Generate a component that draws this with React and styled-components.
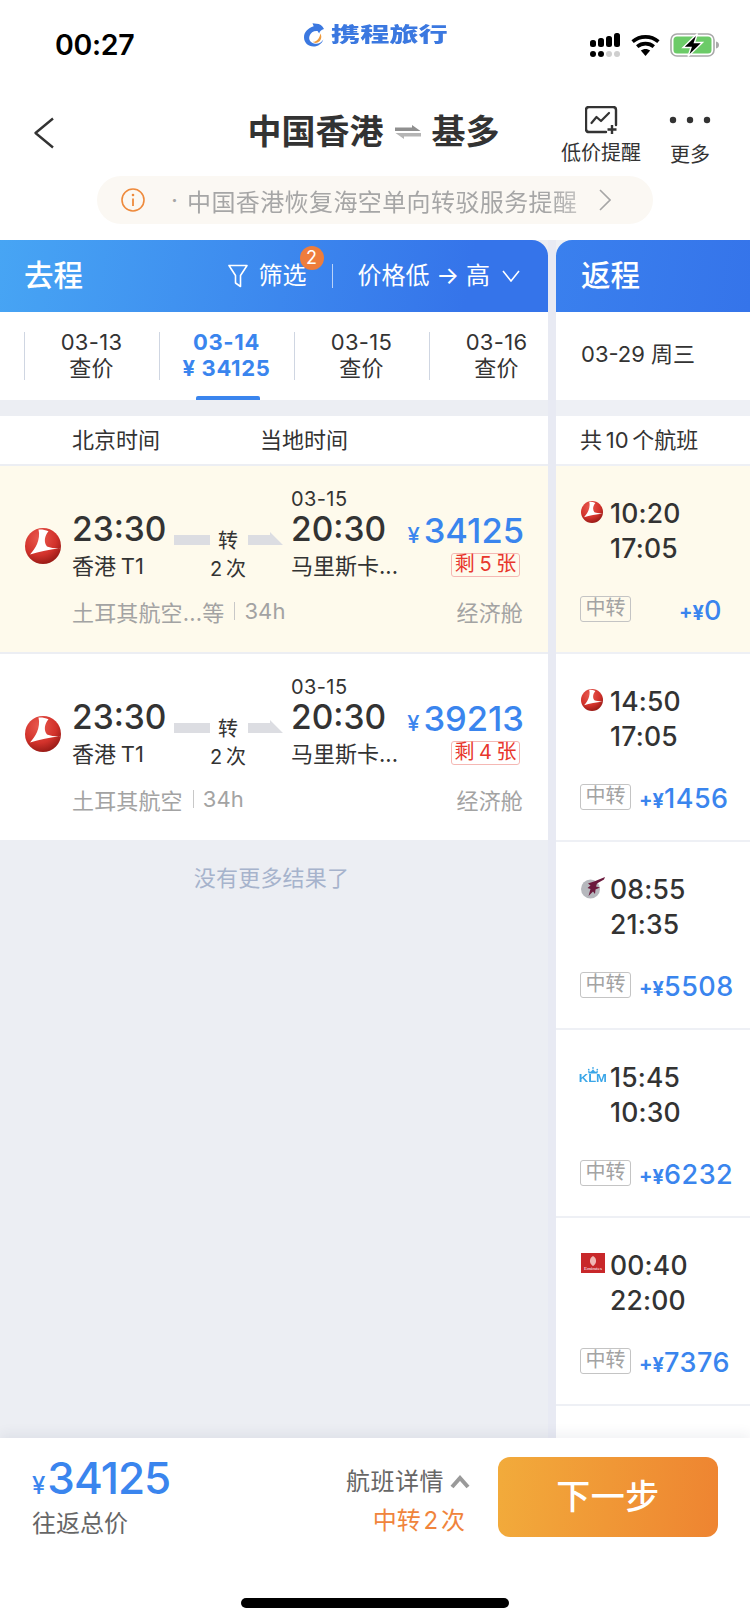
import React from "react";
import styled, { createGlobalStyle } from "styled-components";

const SANS = `Inter, "Noto Sans CJK SC", "Noto Sans", sans-serif`;
const BLUE = "#3a85ee";

const Global = createGlobalStyle`
  html, body { margin: 0; padding: 0; background: #fff; }
  * { box-sizing: border-box; }
  body { font-family: ${SANS}; color: #333; }
`;

const Page = styled.div`
  width: 750px; height: 1624px; display: flex; flex-direction: column;
  background: #fff; overflow: hidden; position: relative;
`;

/* status bar */
const StatusBar = styled.div`
  height: 88px; flex: none; display: flex; align-items: flex-start;
  justify-content: space-between; padding: 23px 30px 0 55px; position: relative;
`;
const Clock = styled.div`
  font-size: 28.5px; font-weight: 600; color: #000; line-height: 44px; width: 80px; letter-spacing: -.3px;
`;
const Brand = styled.div`
  display: flex; align-items: center; gap: 6px; margin-left: 27px;
`;
const BrandName = styled.div`
  width: 118px; height: 24px; color: #3b78e0; font-size: 20px; line-height: 24px; font-weight: 800;
  white-space: nowrap;
  span { display: inline-block; transform: scaleX(1.46); transform-origin: left center; }
`;
const StatusIcons = styled.div`
  display: flex; align-items: center; gap: 10px; margin-top: 10px;
`;

/* nav */
const Nav = styled.div`
  flex: none; height: 88px; display: grid; grid-template-columns: 1fr auto 1fr; align-items: start;
`;
const Back = styled.div`
  padding: 29px 0 0 33px; line-height: 0;
`;
const Title = styled.div`
  display: flex; align-items: center; gap: 11px; font-size: 34px; font-weight: 600; color: #333;
  line-height: 48px; padding: 20px 3px 0 0;
`;
const NavActions = styled.div`
  display: flex; justify-content: flex-end; gap: 28px; padding-right: 39px;
`;
const NavAction = styled.div`
  display: flex; flex-direction: column; align-items: center; font-size: 20px; line-height: 26px; color: #333;
  svg { display: block; }
`;
const IconSlot = styled.div`
  height: ${p => p.$h}px; padding-top: ${p => p.$top}px;
`;

/* notice */
const NoticeWrap = styled.div`
  flex: none; height: 64px; padding: 0 97px;
`;
const Notice = styled.div`
  height: 48px; border-radius: 24px; background: #fbf8f3; display: flex; align-items: center;
  padding: 0 42px 0 24px; font-size: 24px; color: #a6a6a6;
`;
const NoticeDot = styled.span`
  margin: 0 11px 0 26px; width: 5px; text-align: center;
`;
const NoticeText = styled.span`
  white-space: nowrap; flex: 1; overflow: hidden; letter-spacing: .4px;
  -webkit-mask-image: linear-gradient(90deg, #000 88%, rgba(0,0,0,.35) 100%);
  mask-image: linear-gradient(90deg, #000 88%, rgba(0,0,0,.35) 100%);
`;

/* columns */
const Columns = styled.div`
  flex: 1; min-height: 0; display: flex; gap: 8px; background: #e8eaf3; overflow: hidden; position: relative;
`;
const LeftPanel = styled.div`
  width: 548px; flex: none; background: #eceef3; display: flex; flex-direction: column;
`;
const RightPanel = styled.div`
  flex: 1; background: #eef0f5; display: flex; flex-direction: column;
`;
const PanelHead = styled.div`
  height: 72px; flex: none; display: flex; align-items: center; color: #fff;
  background: ${p => p.$right
    ? "linear-gradient(100deg, #3a80ee 0%, #3574ea 100%)"
    : "linear-gradient(100deg, #47a5f4 0%, #3574ea 85%)"};
  border-radius: ${p => p.$right ? "16px 0 0 0" : "0 16px 0 0"};
  padding: ${p => p.$right ? "0 0 0 25px" : "0 28px 0 24px"};
`;
const HeadTitle = styled.div`
  font-size: 29.5px; font-weight: 500; line-height: 40px; margin-top: -2px;
`;
const HeadTools = styled.div`
  margin-left: auto; display: flex; align-items: center; font-size: 24px; line-height: 32px;
`;
const FilterBtn = styled.div`
  display: flex; align-items: center; gap: 11px; position: relative;
`;
const Badge = styled.span`
  position: absolute; right: -17px; top: -14px; width: 24px; height: 24px; border-radius: 50%;
  background: #ee7d3c; color: #fff; font-size: 18px; line-height: 24px; text-align: center;
`;
const HeadDivider = styled.span`
  width: 1px; height: 24px; background: rgba(255,255,255,.65); margin: 0 25px 0 25px;
`;
const SortBtn = styled.div`
  display: flex; align-items: center; gap: 12px;
`;

const DateRow = styled.div`
  height: 88px; flex: none; background: #fff; display: flex; padding: 20px 0 0 24px; position: relative;
`;
const DateCell = styled.div`
  width: 135px; height: 48px; flex: none; border-left: 1px solid #cfd6e2; text-align: center;
  font-size: 22px; line-height: 26px; letter-spacing: ${p => p.$active ? ".65px" : ".3px"};
  color: ${p => p.$active ? BLUE : "#333"};
  font-weight: ${p => p.$active ? 700 : 400};
  white-space: nowrap; padding-right: 1px;
  position: relative;
`;
const DateText = styled.div`
  margin-top: -3px;
`;
const DateMark = styled.span`
  position: absolute; left: 36px; bottom: -20px; width: 64px; height: 4px; border-radius: 2px 2px 0 0; background: ${BLUE};
`;
const RightDate = styled.div`
  height: 88px; flex: none; background: #fff; padding-left: 25px; font-size: 22px; line-height: 84px; color: #333;
`;
const Strip = styled.div`
  height: 16px; flex: none;
`;
const SubHead = styled.div`
  height: 48px; flex: none; background: #fff; font-size: 22px; line-height: 48px; color: #333;
  padding-left: ${p => p.$pad}px; margin-bottom: 2px; display: flex; gap: 13px; word-spacing: -2.5px;
  span { width: 87px; white-space: nowrap; }
  span + span { margin-left: 88px; }
`;

/* left flight card */
const Card = styled.div`
  height: 186px; flex: none; margin-bottom: 2px; padding: 20px 26px 0 25px;
  background: ${p => p.$hl ? "#fefaec" : "#fff"};
`;
const CardMain = styled.div`
  display: flex; height: 96px;
`;
const AirlineSlot = styled.div`
  width: 47px; flex: none; padding-top: 42px; line-height: 0;
`;
const DepCol = styled.div`
  width: 102px; flex: none; padding-top: 26px;
`;
const TimeBig = styled.div`
  font-size: 33.5px; font-weight: 500; line-height: 36px; color: #333; white-space: nowrap; margin-top: -1px; margin-bottom: 1px;
`;
const Station = styled.div`
  font-size: 22px; line-height: 30px; margin-top: 4px; color: #333; white-space: nowrap; word-spacing: -1.5px;
`;
const TransferCol = styled.div`
  width: 117px; flex: none; display: flex; align-items: flex-start; padding-top: 49px;
  svg { display: block; flex: none; }
`;
const TransferText = styled.div`
  width: 38px; flex: none; text-align: center; font-size: 20px; line-height: 28px; color: #333;
  margin-top: -8px; white-space: nowrap; word-spacing: -2px; padding-right: 2px;
`;
const ArrCol = styled.div`
  width: 112px; flex: none;
`;
const NextDay = styled.div`
  font-size: 20px; line-height: 26px; color: #333; letter-spacing: .4px;
`;
const PriceCol = styled.div`
  flex: 1; min-width: 0; padding-top: 26px; display: flex; flex-direction: column; align-items: flex-end;
`;
const Price = styled.div`
  color: ${BLUE}; font-size: 34.5px; height: 38px; line-height: 38px; font-weight: 500; white-space: nowrap; margin-right: -2px;
  span { font-size: 22px; margin-right: 4px; line-height: 1; }
`;
const Left = styled.div`
  margin-top: 3px; height: 24px; width: 69px; margin-right: 2px; border: 1px solid #f5b8b4; border-radius: 3px;
  color: #e8372c; font-size: 20px; line-height: 21px; text-align: center; white-space: nowrap; word-spacing: -1px;
`;
const CardFoot = styled.div`
  margin-top: 14px; padding-left: 47px; display: flex; align-items: center; height: 30px;
  font-size: 22px; color: #a3a3a3; white-space: nowrap; letter-spacing: .15px;
`;
const FootSep = styled.span`
  width: 1px; height: 18px; background: #c8c8c8; margin: 0 9px 0 10px;
`;
const FootCabin = styled.span`
  margin-left: auto; margin-right: -1px;
`;
const NoMore = styled.div`
  text-align: center; font-size: 22px; line-height: 30px; color: #a6b3cc; padding-top: 21px; padding-right: 5px; letter-spacing: .2px;
`;

/* right flight rows */
const Row = styled.div`
  height: 186px; flex: none; margin-bottom: 2px; padding: 30px 0 0 24px;
  background: ${p => p.$hl ? "#fefaec" : "#fff"};
`;
const RowTop = styled.div`
  display: flex; height: 70px;
`;
const RowLogo = styled.div`
  width: 30px; flex: none; padding: 5px 0 0 1px; line-height: 0;
`;
const RowTime = styled.div`
  font-size: 26.5px; font-weight: 500; line-height: 35px; color: #333; letter-spacing: .2px;
`;
const RowFoot = styled.div`
  margin-top: 30px; display: flex; align-items: center; height: 26px;
`;
const StopTag = styled.div`
  width: 51px; height: 26px; flex: none; border: 1px solid #c4c4c4; border-radius: 3px; font-size: 20px;
  line-height: 23px; text-align: center; color: #a3a3a3; white-space: nowrap;
`;
const Extra = styled.div`
  margin-left: ${p => p.$ml}px; margin-top: 5px; color: ${BLUE}; font-size: 27px; font-weight: 500; line-height: 30px;
  white-space: nowrap; letter-spacing: .5px;
  span { font-size: 20px; font-weight: 700; letter-spacing: 0; }
`;
const Filler = styled.div`
  height: 40px; flex: none; background: #fff;
`;

/* bottom */
const BottomBar = styled.div`
  flex: none; height: 186px; background: #fff; position: relative; display: flex; align-items: flex-start;
  padding: 19px 32px 0 32px; box-shadow: 0 -4px 12px rgba(40,50,90,.07);
`;
const Total = styled.div`
  flex: 1;
`;
const TotalPrice = styled.div`
  color: ${BLUE}; font-size: 44px; height: 50px; line-height: 50px; font-weight: 500; white-space: nowrap;
  letter-spacing: -1px; margin-top: -4px;
  span { font-size: 24px; margin-right: 2px; font-weight: 500; letter-spacing: 0; line-height: 1; }
`;
const TotalLabel = styled.div`
  font-size: 24px; line-height: 32px; color: #666; margin-top: 5px;
`;
const Detail = styled.div`
  display: flex; flex-direction: column; align-items: flex-end; margin-right: 28px; padding-top: 9px;
`;
const DetailLink = styled.div`
  display: flex; align-items: center; gap: 6px; font-size: 24px; line-height: 32px; color: #666; letter-spacing: .5px;
  svg { display: block; }
`;
const DetailStops = styled.div`
  margin-top: 7px; font-size: 24px; line-height: 32px; color: #f0843c; margin-right: 5px; white-space: nowrap; word-spacing: -4px;
`;
const NextBtn = styled.div`
  width: 220px; height: 80px; flex: none; border-radius: 12px; color: #fff; font-size: 34px;
  line-height: 80px; text-align: center; font-weight: 500; letter-spacing: .5px;
  background: linear-gradient(95deg, #f2ab3b 0%, #ee8431 100%);
`;
const HomeBar = styled.div`
  position: absolute; left: 241px; top: 160px; width: 268px; height: 10px; border-radius: 5px; background: #000;
`;

/* airline logos */
const TurkishLogo = ({ size }) => {
  const id = `tk${size}`;
  return (
    <svg width={size} height={size} viewBox="0 0 36 36">
      <defs>
        <radialGradient id={id} cx="40%" cy="28%" r="78%">
          <stop offset="0" stopColor="#ea5a50" />
          <stop offset="0.6" stopColor="#d2322b" />
          <stop offset="1" stopColor="#8f1713" />
        </radialGradient>
      </defs>
      <circle cx="18" cy="18" r="18" fill={`url(#${id})`} />
      <path d="M13.5 1.5C16.5 1.2 20 1.6 23.5 3.2C19.5 8 18.5 14 22 18.5C26 20 31 20.6 35.8 20.3C25 21.5 14 23.5 5 26.5C10 21 16 12 13.5 1.5Z" fill="#fff" />
    </svg>
  );
};
const QatarLogo = () => (
  <svg width="24" height="22" viewBox="0 0 24 22">
    <circle cx="9.5" cy="12" r="9.5" fill="#b6b8bd" />
    <path d="M24 0L13 4.5L7 6.5L9.5 8.5L6.5 11L9.5 12L7.5 19L12 14.5L14 17L14.5 12.5L19 10.5L15 9.5L16 6.5L23 2.5Z" fill="#6b1a3d" />
  </svg>
);
const KlmBox = styled.div`
  width: 24px; height: 20px; display: flex; flex-direction: column; align-items: center; color: #3aa6e8; margin-top: 2px;
  svg { display: block; }
`;
const KlmText = styled.span`
  font-size: 10px; line-height: 9px; font-weight: 700; font-family: "Liberation Sans", sans-serif;
  display: inline-block; transform: scaleX(1.3);
`;
const KlmLogo = () => (
  <KlmBox>
    <svg width="12" height="7" viewBox="0 0 14 8">
      <circle cx="7" cy="1" r="1" fill="#3aa6e8" />
      <circle cx="2" cy="3" r="1" fill="#3aa6e8" />
      <circle cx="12" cy="3" r="1" fill="#3aa6e8" />
      <path d="M2 7.5L1 4.5L4.5 5.5L7 2.5L9.5 5.5L13 4.5L12 7.5Z" fill="#3aa6e8" />
    </svg>
    <KlmText>KLM</KlmText>
  </KlmBox>
);
const EmiratesBox = styled.div`
  width: 24px; height: 20px; background: #c8282a; color: #fff; position: relative;
  overflow: hidden; display: flex; flex-direction: column; align-items: center;
  svg { display: block; margin-top: 3px; }
`;
const EmiratesText = styled.span`
  font-size: 5px; line-height: 5px; font-family: "Liberation Serif", serif; white-space: nowrap;
`;
const EmiratesLogo = () => (
  <EmiratesBox>
    <svg width="8" height="10" viewBox="0 0 8 10">
      <path d="M4 0C6 1 7.5 3 7 6C6.5 8 5 9.5 4 10C3 9.5 1.5 8 1 6C.5 3 2 1 4 0Z" fill="#f0b8b4" />
    </svg>
    <EmiratesText>Emirates</EmiratesText>
  </EmiratesBox>
);

const Dolphin = () => (
  <svg width="21" height="24" viewBox="0 0 21 24">
    <path d="M20 6C18.5 2.5 15.5 .8 12.5 .8L8.5 .3L9.7 3.2C4 5 0 9 0 14.2C0 19.5 4.2 23.5 9.5 23.5C14 23.5 18 20.8 19.3 16.5C17.5 20 13.5 21.5 10 20.5C6 19 4.5 16.5 5.5 13C6.5 9.5 10 7.5 13.5 8L15.2 10.5C15.6 8.5 17.2 6.8 20 6Z" fill="#3b78e0" />
    <path d="M16.3 10.5C18.3 13.5 17.3 18 13.5 19.6C11.5 20.3 9.8 19.8 8.8 18.8C12.5 19 15.8 15.5 16.3 10.5Z" fill="#ee9a3c" />
  </svg>
);

const Signal = () => (
  <svg width="31" height="24" viewBox="0 0 31 24">
    <rect x="0" y="7" width="6" height="7" rx="2.5" fill="#000" />
    <rect x="8" y="5" width="6" height="9" rx="2.5" fill="#000" />
    <rect x="16" y="3" width="6" height="11" rx="2.5" fill="#000" />
    <rect x="24" y="0" width="6" height="14" rx="2.5" fill="#000" />
    <rect x="0" y="18" width="6" height="6" rx="3" fill="#000" />
    <rect x="8" y="18" width="6" height="6" rx="3" fill="#000" />
    <rect x="16" y="18" width="6" height="6" rx="3" fill="#cfcfcf" />
    <rect x="24" y="18" width="6" height="6" rx="3" fill="#cfcfcf" />
  </svg>
);
const Wifi = () => (
  <svg width="29" height="21" viewBox="0 0 29 21" fill="none">
    <path d="M14.5 21L9.8 15.6C12.4 13.4 16.6 13.4 19.2 15.6Z" fill="#000" />
    <path d="M6.2 11.6C10.8 7.6 18.2 7.6 22.8 11.6" stroke="#000" strokeWidth="3.6" />
    <path d="M1.6 6.6C9 .3 20 .3 27.4 6.6" stroke="#000" strokeWidth="3.6" />
  </svg>
);
const Battery = () => (
  <svg width="50" height="24" viewBox="0 0 50 24">
    <rect x="1" y="1" width="43" height="22" rx="6" fill="none" stroke="#a9a9a9" strokeWidth="1.6" />
    <rect x="3.5" y="3.5" width="38" height="17" rx="3.5" fill="#6ccb68" />
    <path d="M46 8.5C48 9 49 10.3 49 12C49 13.7 48 15 46 15.5Z" fill="#a9a9a9" />
    <path d="M27.5 0.5L13 14.5H21L18 23.5L32.5 9.5H24.5Z" fill="#000" stroke="#fff" strokeWidth="1.4" />
  </svg>
);

const ChevronLeft = () => (
  <svg width="22" height="32" viewBox="0 0 22 32" fill="none">
    <path d="M20 1.5L2.5 16L20 30.5" stroke="#333" strokeWidth="2.4" strokeLinejoin="round" />
  </svg>
);
const SwapArrows = () => (
  <svg width="26" height="14" viewBox="0 0 26 14">
    <path d="M0 2.5H17V0L25.5 6H0Z" fill="#8f8f8f" />
    <path d="M26 8H.5L9 14V11.5H26Z" fill="#b5b5b5" />
  </svg>
);
const AlertIcon = () => (
  <svg width="33" height="28" viewBox="0 0 33 28" fill="none">
    <path d="M21 26H4C2.3 26 1 24.7 1 23V4C1 2.3 2.3 1 4 1H28C29.7 1 31 2.3 31 4V19" stroke="#333" strokeWidth="2.4" strokeLinecap="round" />
    <path d="M6.5 17L11.5 11L16 15L24 7" stroke="#333" strokeWidth="2.2" strokeLinecap="round" strokeLinejoin="round" />
    <path d="M27 19V28M22.5 23.5H31.5" stroke="#333" strokeWidth="2.4" />
  </svg>
);
const MoreDots = () => (
  <svg width="42" height="8" viewBox="0 0 42 8">
    <circle cx="4" cy="4" r="3.2" fill="#333" />
    <circle cx="21" cy="4" r="3.2" fill="#333" />
    <circle cx="38" cy="4" r="3.2" fill="#333" />
  </svg>
);
const InfoIcon = () => (
  <svg width="24" height="24" viewBox="0 0 24 24" fill="none">
    <circle cx="12" cy="12" r="11" stroke="#ee8a3c" strokeWidth="1.6" />
    <circle cx="12" cy="7" r="1.3" fill="#ee8a3c" />
    <path d="M12 10.5V18" stroke="#ee8a3c" strokeWidth="1.8" />
  </svg>
);
const ChevronRight = () => (
  <svg width="12" height="22" viewBox="0 0 12 22" fill="none">
    <path d="M1 1L11 11L1 21" stroke="#a6a6a6" strokeWidth="1.6" />
  </svg>
);
const FunnelIcon = () => (
  <svg width="20" height="24" viewBox="0 0 20 24" fill="none">
    <path d="M1 1.5H19L12.5 11.5V22.5L7.5 19V11.5Z" stroke="#fff" strokeWidth="1.6" strokeLinejoin="round" />
  </svg>
);
const ChevronDown = () => (
  <svg width="18" height="12" viewBox="0 0 18 12" fill="none">
    <path d="M1 1L9 11L17 1" stroke="#fff" strokeWidth="1.6" />
  </svg>
);
const ChevronUpBold = () => (
  <svg width="20" height="14" viewBox="0 0 20 14" fill="none">
    <path d="M2 12L10 3L18 12" stroke="#9a9a9a" strokeWidth="4" />
  </svg>
);
const BarLeft = () => (
  <svg width="36" height="10" viewBox="0 0 36 10"><rect width="36" height="10" fill="#dcdde2" /></svg>
);
const ArrowBar = styled.svg`
  margin-top: -3px;
`;
const BarRight = () => (
  <ArrowBar width="35" height="13" viewBox="0 0 35 13"><path d="M0 3H22V0L35 13H0Z" fill="#dcdde2" /></ArrowBar>
);

const dates = [
  { d: "03-13", p: "查价" },
  { d: "03-14", p: "¥ 34125", active: true },
  { d: "03-15", p: "查价" },
  { d: "03-16", p: "查价" },
];
const flights = [
  { hl: true, airline: "土耳其航空...等", price: "34125", left: 5 },
  { hl: false, airline: "土耳其航空", price: "39213", left: 4 },
];
const returns = [
  { hl: true, Logo: () => <TurkishLogo size={22} />, t1: "10:20", t2: "17:05", extra: "0", ml: 48 },
  { Logo: () => <TurkishLogo size={22} />, t1: "14:50", t2: "17:05", extra: "1456", ml: 8 },
  { Logo: QatarLogo, t1: "08:55", t2: "21:35", extra: "5508", ml: 8 },
  { Logo: KlmLogo, t1: "15:45", t2: "10:30", extra: "6232", ml: 8 },
  { Logo: EmiratesLogo, t1: "00:40", t2: "22:00", extra: "7376", ml: 8 },
];

export default function App() {
  return (
    <Page>
      <Global />
      <StatusBar>
        <Clock>00:27</Clock>
        <Brand>
          <Dolphin />
          <BrandName><span>携程旅行</span></BrandName>
        </Brand>
        <StatusIcons>
          <Signal />
          <Wifi />
          <Battery />
        </StatusIcons>
      </StatusBar>
      <Nav>
        <Back><ChevronLeft /></Back>
        <Title>
          <span>中国香港</span>
          <SwapArrows />
          <span>基多</span>
        </Title>
        <NavActions>
          <NavAction>
            <IconSlot $h={52} $top={18}><AlertIcon /></IconSlot>
            <div>低价提醒</div>
          </NavAction>
          <NavAction>
            <IconSlot $h={54} $top={28}><MoreDots /></IconSlot>
            <div>更多</div>
          </NavAction>
        </NavActions>
      </Nav>
      <NoticeWrap>
        <Notice>
          <InfoIcon />
          <NoticeDot>·</NoticeDot>
          <NoticeText>中国香港恢复海空单向转驳服务提醒</NoticeText>
          <ChevronRight />
        </Notice>
      </NoticeWrap>
      <Columns>
        <LeftPanel>
          <PanelHead>
            <HeadTitle>去程</HeadTitle>
            <HeadTools>
              <FilterBtn>
                <FunnelIcon />
                <span>筛选</span>
                <Badge>2</Badge>
              </FilterBtn>
              <HeadDivider />
              <SortBtn>
                <span>价格低 → 高</span>
                <ChevronDown />
              </SortBtn>
            </HeadTools>
          </PanelHead>
          <DateRow>
            {dates.map(x => (
              <DateCell key={x.d} $active={x.active}>
                <DateText>
                  <div>{x.d}</div>
                  <div>{x.p}</div>
                </DateText>
                {x.active && <DateMark />}
              </DateCell>
            ))}
          </DateRow>
          <Strip />
          <SubHead $pad={72}>
            <span>北京时间</span>
            <span>当地时间</span>
          </SubHead>
          {flights.map(f => (
            <Card key={f.price} $hl={f.hl}>
              <CardMain>
                <AirlineSlot><TurkishLogo size={36} /></AirlineSlot>
                <DepCol>
                  <TimeBig>23:30</TimeBig>
                  <Station>香港 T1</Station>
                </DepCol>
                <TransferCol>
                  <BarLeft />
                  <TransferText>
                    <div>转</div>
                    <div>2 次</div>
                  </TransferText>
                  <BarRight />
                </TransferCol>
                <ArrCol>
                  <NextDay>03-15</NextDay>
                  <TimeBig>20:30</TimeBig>
                  <Station>马里斯卡...</Station>
                </ArrCol>
                <PriceCol>
                  <Price><span>¥</span>{f.price}</Price>
                  <Left>剩 {f.left} 张</Left>
                </PriceCol>
              </CardMain>
              <CardFoot>
                <span>{f.airline}</span>
                <FootSep />
                <span>34h</span>
                <FootCabin>经济舱</FootCabin>
              </CardFoot>
            </Card>
          ))}
          <NoMore>没有更多结果了</NoMore>
        </LeftPanel>
        <RightPanel>
          <PanelHead $right>
            <HeadTitle>返程</HeadTitle>
          </PanelHead>
          <RightDate>03-29 周三</RightDate>
          <Strip />
          <SubHead $pad={24}>
            <span>共 10 个航班</span>
          </SubHead>
          {returns.map(r => (
            <Row key={r.t1} $hl={r.hl}>
              <RowTop>
                <RowLogo><r.Logo /></RowLogo>
                <div>
                  <RowTime>{r.t1}</RowTime>
                  <RowTime>{r.t2}</RowTime>
                </div>
              </RowTop>
              <RowFoot>
                <StopTag>中转</StopTag>
                <Extra $ml={r.ml}><span>+¥</span>{r.extra}</Extra>
              </RowFoot>
            </Row>
          ))}
          <Filler />
        </RightPanel>
      </Columns>
      <BottomBar>
        <Total>
          <TotalPrice><span>¥</span>34125</TotalPrice>
          <TotalLabel>往返总价</TotalLabel>
        </Total>
        <Detail>
          <DetailLink>航班详情<ChevronUpBold /></DetailLink>
          <DetailStops>中转 2 次</DetailStops>
        </Detail>
        <NextBtn>下一步</NextBtn>
        <HomeBar />
      </BottomBar>
    </Page>
  );
}
